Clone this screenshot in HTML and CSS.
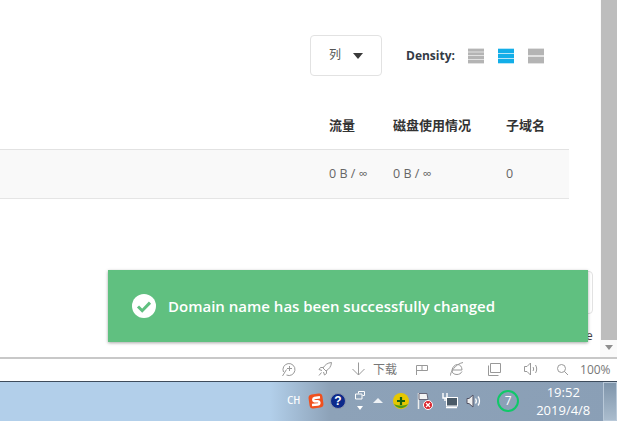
FILE: index.html
```html
<!doctype html>
<html>
<head>
  <meta charset="utf-8">
  <title>Domains</title>
  <link rel="stylesheet" href="styles.css">
</head>
<body>
<div class="browser-viewport">
  <div class="page-content">
    <div class="table-toolbar">
      <div class="columns-button">
        <span class="columns-label">列</span>
        <span class="caret-down"></span>
      </div>
      <div class="density-label">Density:</div>
      <div class="density-options">
        <svg class="density-icon" width="16" height="16" viewBox="0 0 16 16"><path d="M0 0h16v16H0z" fill="#e2e2e2"/><path d="M0 1h16v2.500H0zM0 4.500h16V7H0zM0 8h16v3H0zM0 12h16v3H0z" fill="#b4b4b4"/></svg>
        <svg class="density-icon" width="16" height="16" viewBox="0 0 16 16"><path d="M0 0h16v16H0z" fill="#b8e6f8"/><path d="M0 1h16v4H0zM0 6h16v4H0zM0 11h16v4H0z" fill="#12aee8"/></svg>
        <svg class="density-icon" width="16" height="16" viewBox="0 0 16 16"><path d="M0 0h16v16H0z" fill="#e2e2e2"/><path d="M0 1h16v6H0zM0 9h16v6H0z" fill="#b4b4b4"/></svg>
      </div>
    </div>
    <div class="table-component">
      <div class="table-row table-head">
        <div></div>
        <div>流量</div>
        <div>磁盘使用情况</div>
        <div>子域名</div>
      </div>
      <div class="table-row table-body-row">
        <div></div>
        <div>0 B / ∞</div>
        <div>0 B / ∞</div>
        <div>0</div>
      </div>
    </div>
    <div class="hidden-card"></div>
    <div class="hidden-letter">e</div>
    <div class="toast-success">
      <svg width="24" height="24" viewBox="0 0 24 24"><circle cx="12" cy="12" r="12" fill="#fff"/><path d="M6 12.500l4.200 4.200L18 8.600" fill="none" stroke="#60c080" stroke-width="3"/></svg>
      <span>Domain name has been successfully changed</span>
    </div>
  </div>
  <div class="scrollbar">
    <div class="scrollbar-thumb"></div>
    <div class="scrollbar-arrow"></div>
  </div>
</div>
<div class="status-bar">
  <svg width="16" height="16" viewBox="0 0 16 16" fill="none" stroke="#999"><path d="M2.500 11A6 6 0 1 1 5.500 14M1.500 15L5.500 8.500M6 7.500H11M8.500 5v5"/></svg>
  <svg class="status-rocket" width="16" height="16" viewBox="0 0 16 16" fill="none" stroke="#999"><path d="M14.500 1.500c-4 .3-6.500 2.300-8.500 5.500l3 3c3.200-2 5.200-4.500 5.500-8.500zM6 6.500H3.500L2 8.500 5 9.500M9.500 10v2.500l-2 1.500L6.500 11M4.500 11.500L2 14.500"/></svg>
  <svg class="status-arrow" width="16" height="16" viewBox="0 0 16 16" fill="none" stroke="#999"><path d="M7.500 1.500v12.500M1.500 8l6 6 6-6"/></svg>
  <span class="status-text download-text">下载</span>
  <svg class="status-flag" width="14" height="11" viewBox="0 0 14 11" fill="none" stroke="#999"><path d="M1.500 11V1.500h11v5h-11M7 1.500v5"/></svg>
  <svg class="status-ie" width="16" height="16" viewBox="0 0 16 16" fill="none" stroke="#999"><path d="M3 9h10C13 5.500 11 3.500 8.500 3.500S3.500 6 3 9c-.3 3 2 4.500 5 4.500 2 0 4-1 5-3M1.500 14.500C1 12 6 3 14 1.500"/></svg>
  <svg class="status-window" width="15" height="15" viewBox="0 0 15 15" fill="none" stroke="#999"><path d="M3.500 10.500V1.500h10v9zM1.500 3.500v10h10"/></svg>
  <svg class="status-sound" width="16" height="16" viewBox="0 0 16 16" fill="none" stroke="#999"><path d="M1.500 5.500h2.500l3.500-3.500v12L4 10.500H1.500zM10 6c.8 1.200.8 2.800 0 4M12.500 4c1.600 2.400 1.600 5.600 0 8"/></svg>
  <svg class="status-search" width="13" height="13" viewBox="0 0 13 13" fill="none" stroke="#999"><circle cx="5.500" cy="5.500" r="4"/><path d="M8.500 8.500l3.500 3.500"/></svg>
  <span class="status-text zoom-text">100%</span>
</div>
<div class="taskbar">
  <div class="lang-text">CH</div>
  <svg class="tray-sogou" width="16" height="16" viewBox="0 0 16 16"><rect x="1" y="1" width="14" height="14" rx="3.500" fill="#f0501e" transform="rotate(-8 8 8)"/><path d="M12 4.200L6.500 5a1.700 1.700 0 0 0 0 3.300l3.200-.2a1.700 1.700 0 0 1 0 3.400L4 12" fill="none" stroke="#fff" stroke-width="2.400"/></svg>
  <svg class="tray-help" width="16" height="16" viewBox="0 0 16 16"><circle cx="8" cy="8" r="7.500" fill="#0d2a8c" stroke="#8a94a8"/><text x="8" y="12" text-anchor="middle" class="help-mark">?</text></svg>
  <div class="tray-small">
    <svg width="10" height="9" viewBox="0 0 10 9" fill="none" stroke="#fff"><path d="M3.500 2.500V.5h6v4H7.500M.5 3h6.500v5H.5z"/></svg>
    <span class="caret-white"></span>
  </div>
  <span class="caret-up"></span>
  <svg class="tray-360" width="16" height="16" viewBox="0 0 16 16"><circle cx="8" cy="8" r="8" fill="#e6c700"/><path d="M1 11a8 8 0 0 0 14 0c-4 2-10 2-14 0z" fill="#4a9a1c"/><path d="M8 4v8M4 8h8" stroke="#17620f" stroke-width="2.200"/></svg>
  <svg class="tray-flag" width="16" height="18" viewBox="0 0 16 18"><path d="M1.500 1v16" stroke="#eee" stroke-width="1.500"/><path d="M2 1.500h8l1 6H2z" fill="#f4f4f4" stroke="#667"/><circle cx="11" cy="13" r="4.500" fill="#d9202a" stroke="#fff"/><path d="M9 11l4 4M13 11l-4 4" stroke="#fff" stroke-width="1.300"/></svg>
  <svg class="tray-network" width="16" height="17" viewBox="0 0 16 17" fill="none"><path d="M1 1v5h4V1M3 6v3" stroke="#fff" stroke-width="1.400"/><rect x="4.500" y="5.500" width="11" height="8.500" fill="#4a5a68" stroke="#fff"/><path d="M4 15.500h11" stroke="#fff" stroke-width="1.500"/></svg>
  <svg class="tray-sound" width="16" height="16" viewBox="0 0 16 16" fill="none"><path d="M1 5.500h2l4-3.500v12l-4-3.500H1z" fill="#eee" stroke="#556"/><path d="M9.500 5.500c1 1.500 1 3.500 0 5M12 3.500c2 2.500 2 6.500 0 9" stroke="#fff" stroke-width="1.300"/></svg>
  <div class="tray-badge">7</div>
  <div class="tray-clock">
    <div>19:52</div>
    <div>2019/4/8</div>
  </div>
  <div class="show-desktop"></div>
</div>
</body>
</html>
```

FILE: styles.css
```css
html,
body {
  margin: 0;
  height: 100%;
  background: #fff;
  overflow: hidden;
  font-family: "Open Sans", "Noto Sans CJK SC", sans-serif;
}
svg {
  flex-shrink: 0;
}
.browser-viewport {
  display: flex;
  height: 357px;
}
.page-content {
  position: relative;
  flex-grow: 1;
  overflow: hidden;
}
/* toolbar above the table */
.table-toolbar {
  display: flex;
  align-items: center;
  height: 41px;
  margin-top: 35px;
  padding-left: 310px;
}
.columns-button {
  display: flex;
  align-items: center;
  box-sizing: border-box;
  width: 72px;
  height: 41px;
  padding-left: 18px;
  border: 1px solid #e2e2e2;
  border-radius: 4px;
  color: #555;
  font-size: 12px;
}
.columns-label {
  margin-bottom: 3px;
}
.caret-down {
  width: 0;
  height: 0;
  margin-left: 12px;
  border-top: 6px solid #3a3a3a;
  border-left: 5px solid transparent;
  border-right: 5px solid transparent;
}
.density-label {
  margin-left: 24px;
  color: #333a45;
  font-size: 12px;
  font-weight: 700;
}
.density-options {
  display: flex;
  gap: 14px;
  margin-left: 13px;
}
.table-component {
  width: 569px;
  margin-top: 24px;
}
.table-row {
  display: grid;
  grid-template-columns: 329px 64px 113px 1fr;
  align-items: center;
}
.table-head {
  height: 49px;
  color: #333;
  font-size: 13px;
  font-weight: 700;
  border-bottom: 1px solid #e2e2e2;
}
.table-body-row {
  height: 46px;
  padding-bottom: 2px;
  color: #666;
  font-size: 12.500px;
  background: #f9f9f9;
  border-bottom: 1px solid #e5e5e5;
}
.hidden-card {
  position: absolute;
  left: 500px;
  top: 271px;
  width: 91px;
  height: 41px;
  border: 1px solid #e2e2e2;
  border-radius: 4px;
}
.hidden-letter {
  position: absolute;
  left: 586px;
  top: 327px;
  color: #444;
  font-size: 12px;
}
.toast-success {
  position: absolute;
  left: 108px;
  top: 270px;
  display: flex;
  align-items: center;
  gap: 12px;
  box-sizing: border-box;
  width: 480px;
  height: 72px;
  padding-left: 24px;
  background: #60c080;
  box-shadow: 0 1px 3px rgba(0,0,0,.35);
  color: #fff;
  font-size: 15px;
  font-weight: 600;
}
.scrollbar {
  display: flex;
  flex-direction: column;
  align-items: center;
  box-sizing: border-box;
  width: 17px;
  padding-left: 1px;
  background: #fafafa;
}
.scrollbar-thumb {
  width: 100%;
  height: 340px;
  background: #bdbdbd;
}
.scrollbar-arrow {
  width: 0;
  height: 0;
  margin-top: 5px;
  border-top: 5px solid #8f8f8f;
  border-left: 4px solid transparent;
  border-right: 4px solid transparent;
}
/* IE status bar */
.status-bar {
  display: flex;
  align-items: center;
  box-sizing: border-box;
  height: 24px;
  padding-left: 281px;
  padding-bottom: 2px;
  background: #fff;
  border-top: 2px solid #c8c8c8;
}
.status-text {
  flex-shrink: 0;
  color: #777;
  font-size: 12px;
  white-space: nowrap;
}
.status-rocket { margin-left: 20px; }
.status-arrow { margin-left: 18px; }
.download-text { margin-left: 6px; }
.status-flag { margin-left: 18px; }
.status-ie { margin-left: 20px; }
.status-window { margin-left: 22px; }
.status-sound { margin-left: 21px; }
.status-search { margin-left: 17px; }
.zoom-text { margin-left: 11px; }
/* windows taskbar */
.taskbar {
  display: flex;
  align-items: center;
  height: 40px;
  padding-left: 287px;
  padding-bottom: 2px;
  background: linear-gradient(90deg, #b2cfea 0, #b2cfea 270px, #8da2b8 330px, #8a9fb6 100%);
  border-top: 1px solid #3e4c5c;
  box-sizing: border-box;
}
.lang-text {
  color: #fff;
  font-family: "DejaVu Sans Mono", monospace;
  font-size: 11px;
}
.tray-sogou { margin-left: 8px; }
.tray-help { margin-left: 6px; }
.help-mark {
  fill: #fff;
  font-family: "Liberation Sans", sans-serif;
  font-size: 12px;
  font-weight: 700;
}
.tray-small {
  display: flex;
  flex-direction: column;
  align-items: center;
  gap: 6px;
  margin-left: 9px;
}
.caret-white {
  width: 0;
  height: 0;
  border-top: 4px solid #fff;
  border-left: 3px solid transparent;
  border-right: 3px solid transparent;
}
.caret-up {
  width: 0;
  height: 0;
  margin-left: 8px;
  border-bottom: 5px solid #eef2f6;
  border-left: 5px solid transparent;
  border-right: 5px solid transparent;
}
.tray-360 { margin-left: 10px; }
.tray-flag { margin-left: 8px; }
.tray-network { margin-left: 9px; }
.tray-sound { margin-left: 8px; }
.tray-badge {
  flex-shrink: 0;
  box-sizing: border-box;
  width: 22px;
  height: 22px;
  margin-left: 15px;
  border: 2px solid #10c868;
  border-radius: 50%;
  color: #fff;
  font-size: 12px;
  line-height: 18px;
  text-align: center;
}
.tray-clock {
  flex-shrink: 0;
  width: 72px;
  margin-left: 8px;
  color: #fff;
  font-size: 13px;
  line-height: 18px;
  text-align: center;
}
.show-desktop {
  align-self: stretch;
  flex-shrink: 0;
  box-sizing: border-box;
  width: 14px;
  margin-left: auto;
  margin-bottom: -2px;
  background: linear-gradient(180deg, #7f95ab, #aabccd);
  border: 1px solid #b8c8d8;
}
```
